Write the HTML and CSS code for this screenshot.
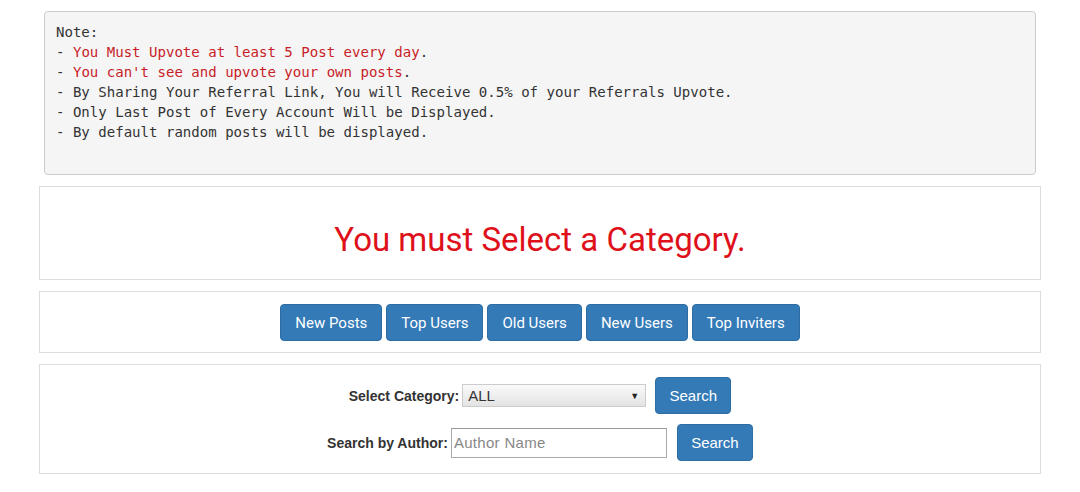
FILE: index.html
```html
<!DOCTYPE html>
<html lang="en">
<head>
    <meta charset="UTF-8">
    <meta name="viewport" content="width=device-width, initial-scale=1.0">
    <title>Upvote Exchange</title>
    <link rel="stylesheet" href="styles.css">
</head>
<body>
    <div class="wrap">
        <!-- Rules -->
        <pre class="note">Note:
- <span class="warn">You Must Upvote at least 5 Post every day</span>.
- <span class="warn">You can't see and upvote your own posts</span>.
- By Sharing Your Referral Link, You will Receive 0.5% of your Referrals Upvote.
- Only Last Post of Every Account Will be Displayed.
- By default random posts will be displayed.

</pre>

        <!-- Message -->
        <div class="panel message">
            <h2>You must Select a Category.</h2>
        </div>

        <!-- Tabs -->
        <div class="panel tabs">
            <button class="btn">New Posts</button>
            <button class="btn">Top Users</button>
            <button class="btn">Old Users</button>
            <button class="btn">New Users</button>
            <button class="btn">Top Inviters</button>
        </div>

        <!-- Filters -->
        <div class="panel filters">
            <form class="row">
                <label>Select Category:</label>
                <div class="select">ALL<span class="caret">&#9660;</span></div>
                <button class="btn btn-search" type="button">Search</button>
            </form>
            <form class="row">
                <label for="author">Search by Author:</label>
                <input id="author" type="text" placeholder="Author Name">
                <button class="btn btn-search" type="button">Search</button>
            </form>
        </div>
    </div>
</body>
</html>
```

FILE: styles.css
```css
body {
    margin: 0;
    background: #fff;
    color: #333;
    font-family: "Liberation Sans", Arial, sans-serif;
}

.wrap {
    padding: 0 39px;
}

.note {
    margin: 11px 5px 11px;
    padding: 10px 11px 12px;
    background: #f5f5f5;
    border: 1px solid #ccc;
    border-radius: 4px;
    font-family: "DejaVu Sans Mono", monospace;
    font-size: 14.05px;
    line-height: 20px;
    color: #333;
}

.note .warn {
    color: #c81d28;
}

.panel {
    border: 1px solid #ddd;
    margin-bottom: 11px;
    background: #fff;
}

.message {
    height: 92px;
    display: flex;
    align-items: center;
    justify-content: center;
}

.message h2 {
    margin: 12px 0 0;
    font-family: Roboto, sans-serif;
    font-weight: 400;
    font-size: 33px;
    color: #de111b;
}

.tabs {
    padding: 12px 0 11px;
    text-align: center;
    font-size: 0;
}

.btn {
    background: #337ab7;
    color: #fff;
    border: 1px solid #2e6da4;
    border-radius: 4px;
    cursor: pointer;
    height: 37px;
    padding: 0 14px;
    font-family: Roboto, sans-serif;
    font-size: 15px;
}

.tabs .btn {
    margin: 0 2px;
}

.filters {
    padding: 12px 0;
    display: flex;
    flex-direction: column;
    align-items: center;
    gap: 10px;
}

.row {
    display: flex;
    align-items: center;
    margin: 0;
}

.row label {
    font-weight: bold;
    font-size: 14px;
    margin-right: 3px;
}

.select {
    width: 171px;
    height: 21px;
    padding: 0 6px 0 5px;
    border: 1px solid #ccc;
    background: linear-gradient(#fafafa, #e3e3e3);
    display: flex;
    align-items: center;
    justify-content: space-between;
    font-size: 15px;
    margin-right: 9px;
}

.select .caret {
    font-size: 9px;
    color: #222;
}

.row input {
    width: 212px;
    height: 28px;
    padding: 0 0 0 2px;
    border: 1px solid #aaa;
    border-top-color: #999;
    font-family: "Liberation Sans", Arial, sans-serif;
    font-size: 15px;
    letter-spacing: 0.3px;
    margin-right: 10px;
}

.row input::placeholder {
    color: #888;
}

.btn-search {
    width: 76px;
    padding: 0;
    font-family: "Liberation Sans", Arial, sans-serif;
}
```
